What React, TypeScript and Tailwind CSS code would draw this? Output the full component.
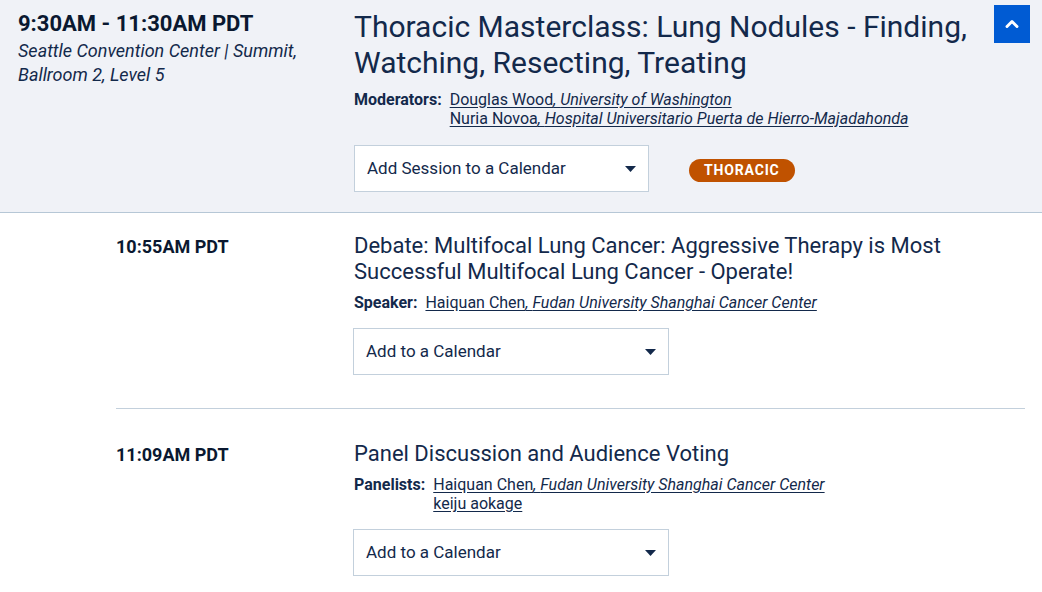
import { ChevronUp } from 'lucide-react';

interface Person {
    name: string;
    org?: string;
}

interface Talk {
    time: string;
    title: string;
    role: string;
    people: Person[];
}

const talks: Talk[] = [
    {
        time: '10:55AM PDT',
        title: 'Debate: Multifocal Lung Cancer: Aggressive Therapy is Most Successful Multifocal Lung Cancer - Operate!',
        role: 'Speaker:',
        people: [{ name: 'Haiquan Chen', org: 'Fudan University Shanghai Cancer Center' }],
    },
    {
        time: '11:09AM PDT',
        title: 'Panel Discussion and Audience Voting',
        role: 'Panelists:',
        people: [
            { name: 'Haiquan Chen', org: 'Fudan University Shanghai Cancer Center' },
            { name: 'keiju aokage' },
        ],
    },
];

function Caret() {
    return (
        <svg width="11" height="6" viewBox="0 0 11 6" className="text-[#13294b]">
            <path d="M0 0 H11 L5.5 6 Z" fill="currentColor" />
        </svg>
    );
}

function CalendarSelect({ label, wide }: { label: string; wide?: boolean }) {
    return (
        <div className={`${wide ? 'w-[316px]' : 'w-[295px]'} h-[47px] flex items-center justify-between bg-white border border-[#c3d0dc] pl-[12px] pr-[12px] text-[17px] text-[#13294b]`}>
            <span>{label}</span>
            <Caret />
        </div>
    );
}

function People({ role, people }: { role: string; people: Person[] }) {
    return (
        <div className="flex gap-[8px] text-[16px] leading-[19px] text-[#13294b]">
            <span className="font-bold">{role}</span>
            <div className="flex flex-col">
                {people.map((p, i) => (
                    <a key={i} href="#" className="underline underline-offset-2">
                        {p.name}
                        {p.org && <i>, {p.org}</i>}
                    </a>
                ))}
            </div>
        </div>
    );
}

export default function App() {
    return (
        <main className="w-[1042px] min-h-[592px] bg-white font-['Roboto',sans-serif] text-[#13294b]">
            {/* Session header */}
            <section className="bg-[#f0f2f7] border-b border-[#b6c7d6] flex pt-[9px] pb-[20px]">
                <div className="w-[354px] pl-[18px] pt-[2px] shrink-0">
                    <div className="text-[22px] leading-[26px] font-bold text-[#0a1830]">9:30AM - 11:30AM PDT</div>
                    <div className="text-[18px] leading-[24px] italic mt-[2px]">
                        Seattle Convention Center | Summit,<br />Ballroom 2, Level 5
                    </div>
                </div>
                <div className="flex-1">
                    <h1 className="text-[30px] leading-[36px] w-[630px]">
                        Thoracic Masterclass: Lung Nodules - Finding, Watching, Resecting, Treating
                    </h1>
                    <div className="mt-[9px]">
                        <People
                            role="Moderators:"
                            people={[
                                { name: 'Douglas Wood', org: 'University of Washington' },
                                { name: 'Nuria Novoa', org: 'Hospital Universitario Puerta de Hierro-Majadahonda' },
                            ]}
                        />
                    </div>
                    <div className="mt-[17px] flex items-center gap-[40px]">
                        <CalendarSelect label="Add Session to a Calendar" />
                        <span className="mt-[4px] bg-[#c05200] text-white text-[14px] font-bold tracking-[0.06em] leading-[23px] px-[15px] rounded-full">
                            THORACIC
                        </span>
                    </div>
                </div>
                <div className="pr-[12px]">
                    <button className="w-[36px] h-[38px] bg-[#005bd3] flex items-center justify-center -mt-[4px]">
                        <ChevronUp size={20} strokeWidth={3.5} className="text-white" />
                    </button>
                </div>
            </section>

            {/* Talks */}
            <div className="ml-[116px] mr-[17px]">
                {talks.map((t, i) => (
                    <div key={i} className={i === 0 ? 'flex pt-[20px] pb-[33px] border-b border-[#c3d0dc]' : 'flex pt-[32px] pb-[32px]'}>
                        <div className="w-[237px] shrink-0 pt-[2px] text-[18px] leading-[24px] font-bold text-[#0a1830]">{t.time}</div>
                        <div className="flex-1">
                            <h2 className="text-[22px] leading-[26px] w-[640px] pl-[1px]">{t.title}</h2>
                            <div className="mt-[8px] pl-[1px]">
                                <People role={t.role} people={t.people} />
                            </div>
                            <div className="mt-[16px]">
                                <CalendarSelect label="Add to a Calendar" wide />
                            </div>
                        </div>
                    </div>
                ))}
            </div>
        </main>
    );
}
